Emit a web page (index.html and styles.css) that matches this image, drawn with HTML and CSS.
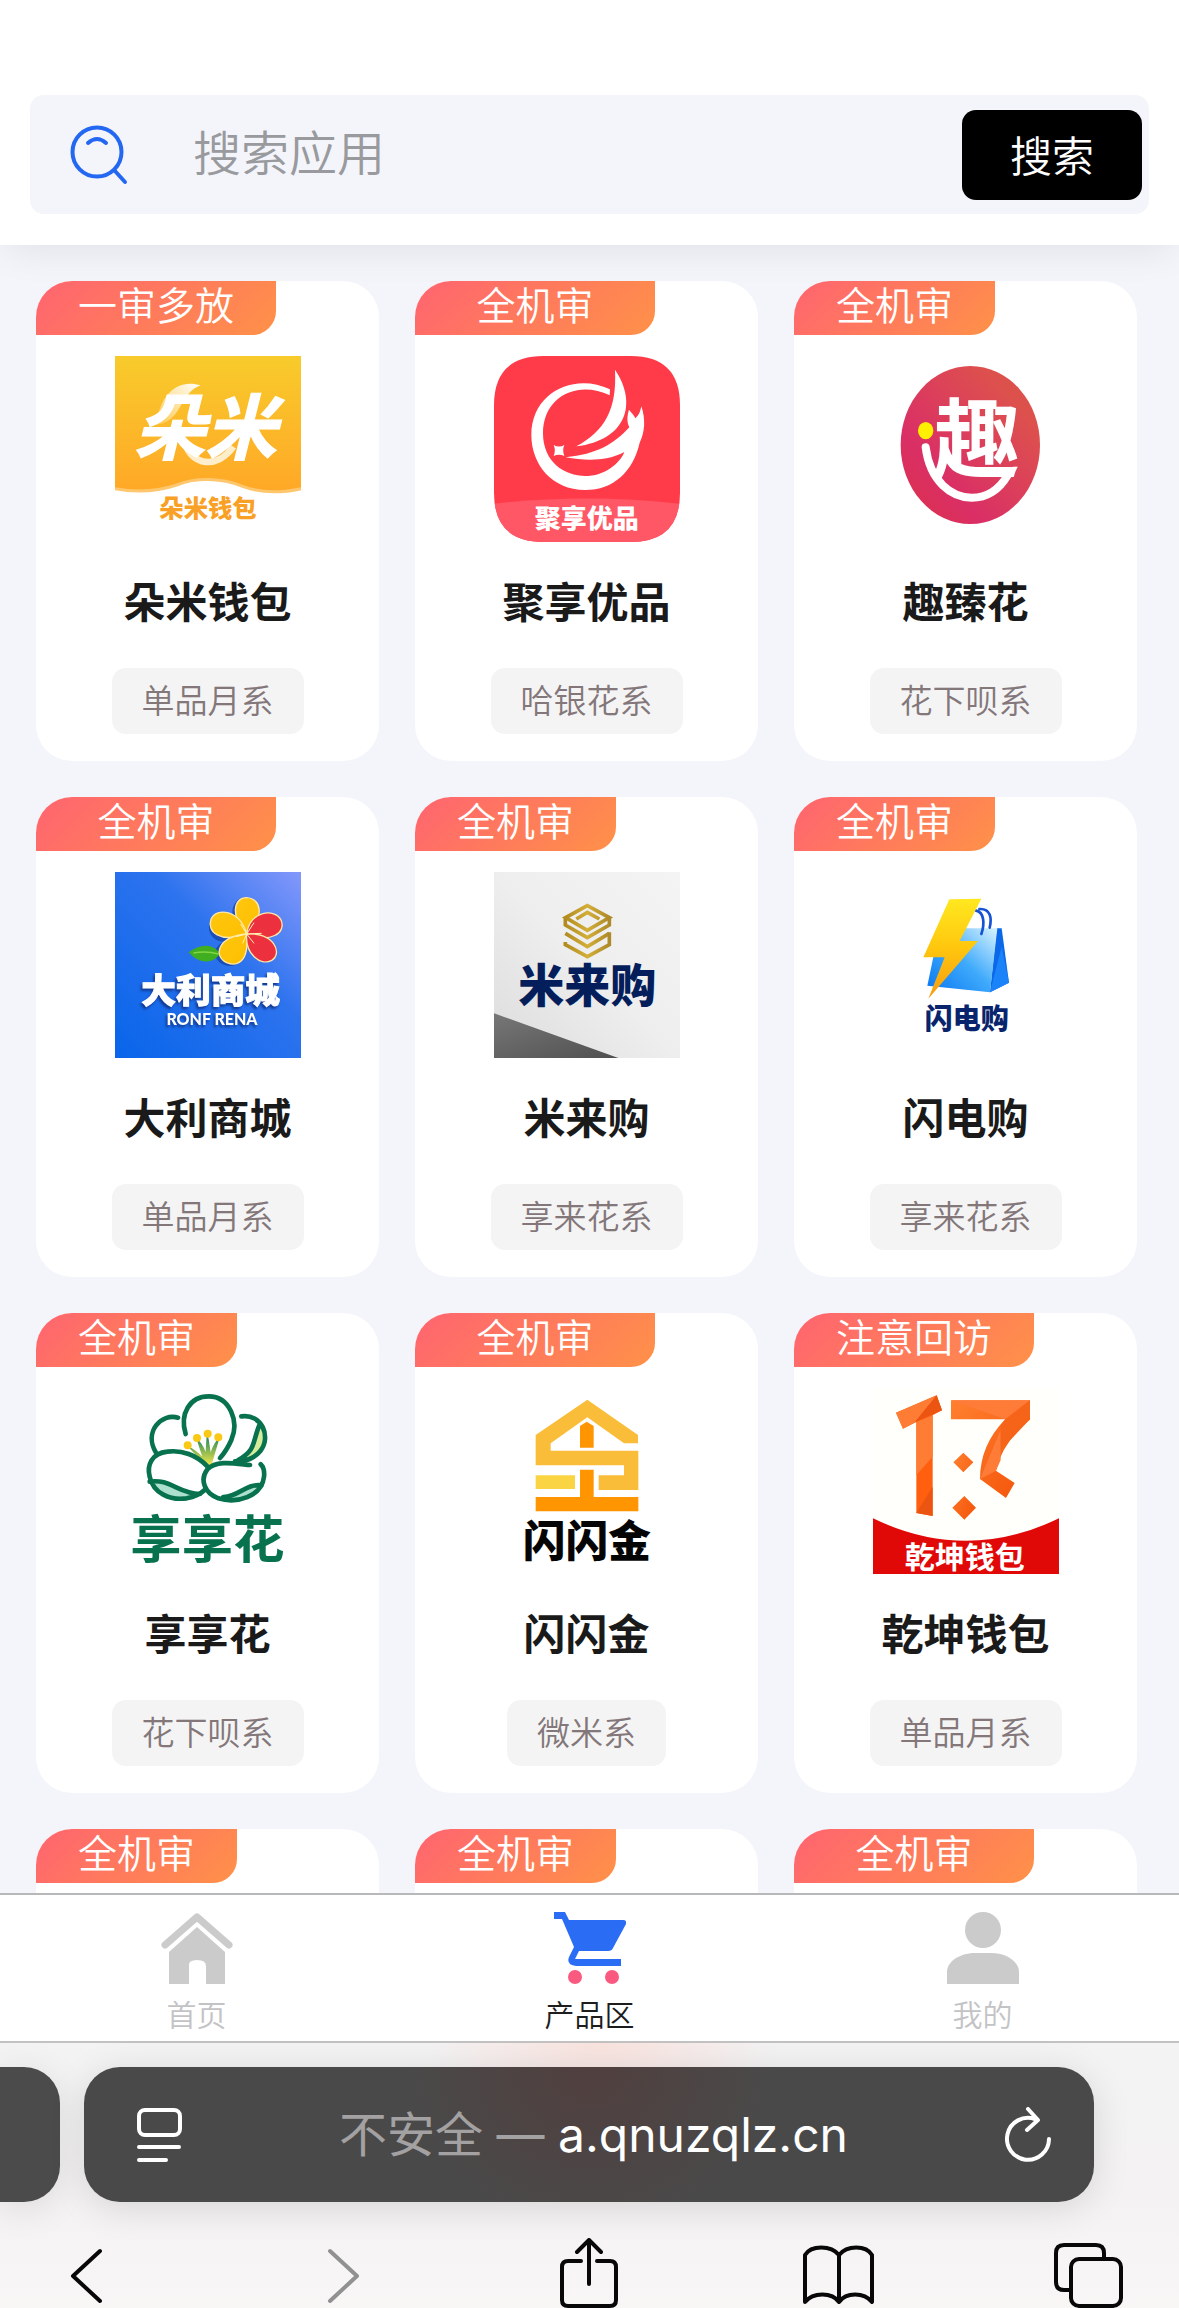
FILE: index.html
```html
<!DOCTYPE html>
<html lang="zh-CN">
<head>
<meta charset="utf-8">
<meta name="viewport" content="width=device-width, initial-scale=1">
<title>产品区</title>
<link rel="stylesheet" href="styles.css">
</head>
<body>
<header class="header">
  <form class="search">
    <svg class="search-icon" viewBox="0 0 58 60" aria-hidden="true"><circle cx="27" cy="27" r="24.500"/><path d="M45 46L55 57M18 18Q27 10 36 18"/></svg>
    <input class="search-input" type="text" placeholder="搜索应用" aria-label="搜索应用">
    <button class="search-button" type="button">搜索</button>
  </form>
</header>

<main class="content">
  <div class="grid">
    <article class="card">
      <span class="tag tag-wide">一审多放</span>
      <svg class="logo" viewBox="345 258 558 558">
        <defs>
          <linearGradient id="duomi" x1="0" y1="0" x2="0" y2="1"><stop offset="0" stop-color="#f8cb2b"/><stop offset="1" stop-color="#ffa827"/></linearGradient>
          <linearGradient id="swoosh" x1="0" y1="1" x2="1" y2="0"><stop offset="0" stop-color="#ffc94a"/><stop offset="1" stop-color="#fff"/></linearGradient>
        </defs>
        <path d="M345 258H903V656C840 670 780 668 730 650C670 625 590 620 530 645C470 665 410 668 345 656Z" fill="url(#duomi)"/>
        <path d="M345 656C410 668 470 665 530 645C590 620 670 625 730 650C780 668 840 670 903 656" fill="none" stroke="#ffc76d" stroke-width="9"/>
        <path d="M468 465C480 370 535 325 602 346C545 365 545 440 490 460Z" fill="url(#swoosh)"/>
        <path d="M555 520C575 585 650 600 700 530" fill="none" stroke="#ffeecb" stroke-width="20"/>
        <text class="logo-text slant" x="402" y="552" font-size="214" fill="#fff" stroke="#fff" stroke-width="4">朵米</text>
        <text class="logo-text" x="624" y="741" font-size="73" text-anchor="middle" fill="#f9a126">朵米钱包</text>
      </svg>
      <h2 class="name">朵米钱包</h2>
      <span class="series">单品月系</span>
    </article>

    <article class="card">
      <span class="tag tag-wide">全机审</span>
      <svg class="logo" viewBox="282 258 558 558">
        <defs><clipPath id="juxiang"><path d="M430 258H692Q840 258 840 406V668Q840 816 692 816H430Q282 816 282 668V406Q282 258 430 258Z"/></clipPath></defs>
        <g clip-path="url(#juxiang)">
          <path d="M282 258H840V816H282Z" fill="#ff3b49"/>
          <path d="M282 701Q560 670 840 701V816H282Z" fill="#ff5766"/>
        </g>
        <path d="M629 376C535 330 429 378 429 490C429 580 500 622 565 618C625 614 665 570 673 546C620 574 560 573 497 562C590 553 642 522 688 472C680 455 681 438 687 419C697 431 703 437 706 445C717 436 721 424 724 409C737 447 735 486 719 518C700 604 640 660 556 660C455 660 394 582 394 495C394 366 524 307 630 358Z" fill="#fff"/>
        <path d="M645 299C713 399 681 510 529 529C614 482 651 420 645 299Z" fill="#fff"/>
        <path d="M461 525Q477 534 493 525Q486 541 493 558Q477 550 461 558Q468 541 461 525Z" fill="#fff"/>
        <text class="logo-text" x="560" y="775" font-size="78" text-anchor="middle" fill="#fff">聚享优品</text>
      </svg>
      <h2 class="name">聚享优品</h2>
      <span class="series">哈银花系</span>
    </article>

    <article class="card">
      <span class="tag">全机审</span>
      <svg class="logo" viewBox="279 258 558 558">
        <defs><linearGradient id="quzhen" x1="1" y1="0" x2="0" y2="1"><stop offset=".2" stop-color="#dd514d"/><stop offset=".7" stop-color="#da2f66"/><stop offset="1" stop-color="#dc3048"/></linearGradient></defs>
        <ellipse cx="571" cy="525" rx="209" ry="237" fill="url(#quzhen)"/>
        <text class="logo-text logo-medium" x="590" y="604" font-size="260" text-anchor="middle" fill="#fff">趣</text>
        <path d="M437 532C450 635 515 683 575 683C625 683 660 655 684 614" fill="none" stroke="#fff" stroke-width="24" stroke-linecap="round"/>
        <ellipse cx="437" cy="482" rx="23" ry="26" fill="#fdf000"/>
      </svg>
      <h2 class="name">趣臻花</h2>
      <span class="series">花下呗系</span>
    </article>

    <article class="card">
      <span class="tag tag-wide">全机审</span>
      <svg class="logo" viewBox="345 276 558 558">
        <defs>
          <linearGradient id="dali" x1="0" y1="1" x2="1" y2="0"><stop offset="0" stop-color="#0965ea"/><stop offset=".6" stop-color="#2d73ee"/><stop offset="1" stop-color="#8498fb"/></linearGradient>
          <linearGradient id="petal" x1="0" y1="0" x2="1" y2="1"><stop offset="0" stop-color="#ffc70f"/><stop offset="1" stop-color="#fdbe00"/></linearGradient>
        </defs>
        <path d="M345 276H903V834H345Z" fill="url(#dali)"/>
        <g fill="#113b9c" opacity=".65"><ellipse cx="672" cy="445" rx="45" ry="40"/><ellipse cx="690" cy="520" rx="45" ry="38"/><ellipse cx="735" cy="396" rx="38" ry="44"/></g>
        <path d="M566 517C600 490 640 490 660 521C640 550 600 556 566 517Z" fill="#3fae20"/>
        <path d="M580 519Q620 512 655 522" stroke="#83d542" stroke-width="5" fill="none"/>
        <g stroke="#ffe7a6" stroke-width="4">
          <path d="M740 462C690 410 700 352 740 353C784 356 796 410 740 462Z" fill="url(#petal)"/>
          <path d="M740 462C660 490 620 455 633 418C650 380 720 390 740 462Z" fill="url(#petal)"/>
          <path d="M740 462C748 550 710 560 680 548C640 530 650 470 740 462Z" fill="url(#petal)"/>
          <path d="M740 462C750 390 825 385 843 420C860 460 810 490 740 462Z" fill="#ec303d"/>
          <path d="M740 462C820 455 850 520 815 541C780 560 735 520 740 462Z" fill="#ec303d"/>
        </g>
        <path d="M740 462L722 432M740 462L708 470M740 462L728 490M740 462L762 428M740 462L785 460M740 462L762 490" stroke="#fff2b0" stroke-width="3"/>
        <text class="logo-text raised" x="632" y="670" font-size="104" text-anchor="middle" fill="#fff" stroke="#fff" stroke-width="3">大利商城</text>
        <text class="logo-latin raised" x="636" y="736" font-size="48" text-anchor="middle" fill="#fff">RONF RENA</text>
      </svg>
      <h2 class="name">大利商城</h2>
      <span class="series">单品月系</span>
    </article>

    <article class="card">
      <span class="tag">全机审</span>
      <svg class="logo" viewBox="282 276 558 558">
        <defs>
          <linearGradient id="milai" x1="1" y1="0" x2="0" y2="1"><stop offset="0" stop-color="#f4f4f4"/><stop offset=".5" stop-color="#eeeeef"/><stop offset="1" stop-color="#dcdcdd"/></linearGradient>
          <linearGradient id="gold" x1="0" y1="0" x2="1" y2="0"><stop offset="0" stop-color="#b18b20"/><stop offset=".5" stop-color="#d3af38"/><stop offset="1" stop-color="#ae8a2a"/></linearGradient>
          <linearGradient id="slate" x1="0" y1="0" x2="1" y2="1"><stop offset="0" stop-color="#777"/><stop offset="1" stop-color="#505050"/></linearGradient>
        </defs>
        <path d="M282 276H840V834H282Z" fill="url(#milai)"/>
        <path d="M282 700L655 834H282Z" fill="url(#slate)"/>
        <g fill="none" stroke="url(#gold)" stroke-width="11">
          <path d="M562 377L628 413L562 451L497 413ZM529 417L562 397L598 417"/>
          <path d="M496 413V435L562 473L628 435V413M496 486V494L562 530L628 494V457"/>
          <path d="M496 460L562 500L628 460"/>
        </g>
        <text class="logo-text" x="562" y="665" font-size="138" text-anchor="middle" fill="#041e5b">米来购</text>
      </svg>
      <h2 class="name">米来购</h2>
      <span class="series">享来花系</span>
    </article>

    <article class="card">
      <span class="tag">全机审</span>
      <svg class="logo" viewBox="279 276 558 558">
        <defs>
          <linearGradient id="bolt" x1="0" y1="0" x2="0" y2="1"><stop offset="0" stop-color="#ffe81f"/><stop offset=".5" stop-color="#ffc60e"/><stop offset="1" stop-color="#f79b11"/></linearGradient>
          <linearGradient id="bag" x1="1" y1="0" x2="0" y2="1"><stop offset="0" stop-color="#d9f3ff"/><stop offset=".5" stop-color="#3faafb"/><stop offset="1" stop-color="#0876f2"/></linearGradient>
        </defs>
        <path d="M650 445H665L687 608L630 637Z" fill="#0a68e9"/>
        <path d="M665 500L687 608L630 637Z" fill="#1b83f9"/>
        <path d="M478 445H652L630 637L442 617Z" fill="url(#bag)"/>
        <path d="M588 392C612 396 615 430 604 462M598 387C632 385 636 415 629 443" fill="none" stroke="#1552d5" stroke-width="8" stroke-linecap="round"/>
        <path d="M508 358L604 356L539 483H594L445 656L494 532H430Z" fill="url(#bolt)"/>
        <text class="logo-text" x="560" y="748" font-size="84" text-anchor="middle" fill="#08246d">闪电购</text>
      </svg>
      <h2 class="name">闪电购</h2>
      <span class="series">享来花系</span>
    </article>

    <article class="card">
      <span class="tag">全机审</span>
      <svg class="logo" viewBox="345 264 558 558">
        <defs><linearGradient id="stamen" x1="0" y1="0" x2="0" y2="1"><stop offset="0" stop-color="#128059"/><stop offset="1" stop-color="#f5e94b"/></linearGradient></defs>
        <path d="M450 548C505 535 530 590 595 583C545 612 480 600 450 548ZM680 592C715 560 745 560 785 556C765 590 725 604 680 592Z" fill="#aee0cf"/>
        <path d="M780 370C750 430 770 455 705 484C775 490 805 430 780 370Z" fill="#d5ec9a"/>
        <path d="M622 497L568 442Q600 462 612 480L592 418Q615 445 618 470L622 405L632 470Q634 445 656 416L634 490Z" fill="url(#stamen)" stroke="url(#stamen)" stroke-width="4"/>
        <g fill="none" stroke="#08724f" stroke-width="14" stroke-linecap="round" stroke-linejoin="round">
          <path d="M557 402C538 340 570 289 626 289C690 289 718 365 694 420Q680 452 660 474"/>
          <path d="M534 353C485 338 430 395 468 458M724 349C785 340 815 410 781 453Q755 485 705 484M780 370C755 430 770 448 715 480"/>
          <path d="M622 499C590 465 545 449 502 455C455 460 440 495 449 530C460 580 510 602 560 595Q595 588 614 570M449 545C510 535 535 582 600 582"/>
          <path d="M750 495C700 490 650 480 622 508C598 540 614 580 655 595C710 612 785 590 792 530Q795 505 782 493M785 556C735 550 720 590 670 591"/>
        </g>
        <g fill="#fac916"><circle cx="563" cy="436" r="12"/><circle cx="591" cy="414" r="12"/><circle cx="623" cy="401" r="12"/><circle cx="655" cy="412" r="12"/></g>
        <text class="logo-text logo-medium" x="622" y="775" font-size="154" text-anchor="middle" fill="#08724f">享享花</text>
      </svg>
      <h2 class="name">享享花</h2>
      <span class="series">花下呗系</span>
    </article>

    <article class="card">
      <span class="tag tag-wide">全机审</span>
      <svg class="logo" viewBox="282 264 558 558">
        <path d="M562 299L714 405V430H672L562 352L452 430V452H715V570H596V526H672V496H407V405Z" fill="#fabd39"/>
        <path d="M407 526H525V567H407Z" fill="#fbd443"/>
        <path d="M540 378L560 365L581 378V443H540ZM540 509H581V591H715V634H407V591H540Z" fill="#ff9500"/>
        <text class="logo-text" x="561" y="771" font-size="128" text-anchor="middle" fill="#050505">闪闪金</text>
      </svg>
      <h2 class="name">闪闪金</h2>
      <span class="series">微米系</span>
    </article>

    <article class="card">
      <span class="tag tag-wide">注意回访</span>
      <svg class="logo" viewBox="279 264 558 558">
        <defs><linearGradient id="ribbon" x1="0" y1="0" x2="1" y2="1"><stop offset="0" stop-color="#ff8030"/><stop offset="1" stop-color="#f45409"/></linearGradient></defs>
        <path d="M279 264H837V822H279Z" fill="#fffffc"/>
        <path d="M279 655Q558 790 837 655V822H279Z" fill="#e10808"/>
        <path d="M348 338L470 286L486 331L458 346V648L409 639V366L369 386Z" fill="#ff5f0f"/>
        <path d="M348 338L470 286L405 366L369 386ZM409 525L458 470V346L409 366Z" fill="#ff7c35"/>
        <path d="M405 366L470 286L486 331ZM409 639L458 560V648Z" fill="#ec5412"/>
        <path d="M513 301H750V358Q665 430 648 512L704 549L678 594L600 537Q600 435 676 358H513Z" fill="url(#ribbon)"/>
        <path d="M513 301L750 301L676 358ZM600 537L662 390V480L648 512Z" fill="#ff7c38"/>
        <path d="M676 358L750 301V358L662 450V375Z" fill="#f56419"/>
        <path d="M550 458L580 487L550 517L520 487ZM553 588L588 623L553 659L517 623Z" fill="url(#ribbon)"/>
        <text class="logo-text logo-medium" x="554" y="803" font-size="90" text-anchor="middle" fill="#fff">乾坤钱包</text>
      </svg>
      <h2 class="name">乾坤钱包</h2>
      <span class="series">单品月系</span>
    </article>

    <article class="card"><span class="tag">全机审</span></article>
    <article class="card"><span class="tag">全机审</span></article>
    <article class="card"><span class="tag tag-wide">全机审</span></article>
  </div>
</main>

<nav class="tabs">
  <a class="tab" href="#">
    <svg class="tab-icon" viewBox="0 0 72 72" aria-hidden="true"><path d="M4 33L36 5L68 33" fill="none" stroke="#cbcbcb" stroke-width="7" stroke-linecap="round" stroke-linejoin="round"/><path d="M36 15L64 40V72H45V54Q45 48 36 48T28 54V72H8V40Z" fill="#cbcbcb"/></svg>
    <span>首页</span>
  </a>
  <a class="tab tab-active" href="#">
    <svg class="tab-icon" viewBox="0 0 72 72" aria-hidden="true"><path d="M0 0H11L15 8H69Q73 8 72 12L59 36Q58 39 54 39H25L21 47H67V54H22Q12 53 15 45L20 35L8 7H0Z" fill="#2a6df4"/><circle cx="21" cy="65" r="7" fill="#fb5a80"/><circle cx="58" cy="65" r="7" fill="#fb5a80"/></svg>
    <span>产品区</span>
  </a>
  <a class="tab" href="#">
    <svg class="tab-icon" viewBox="0 0 72 72" aria-hidden="true"><circle cx="36" cy="18" r="18" fill="#cbcbcb"/><path d="M0 72V60C0 50 12 41 28 41H44C60 41 72 50 72 60V72Z" fill="#cbcbcb"/></svg>
    <span>我的</span>
  </a>
</nav>

<footer class="browser">
  <div class="address-row">
    <div class="previous-page"></div>
    <div class="address">
      <button class="icon-button" type="button" aria-label="页面菜单"><svg class="address-icon" viewBox="0 0 48 56"><rect x="4" y="3" width="41" height="25" rx="6"/><path d="M4 40H44M4 53H31"/></svg></button>
      <p class="url"><span class="url-note">不安全 —</span> a.qnuzqlz.cn</p>
      <button class="icon-button" type="button" aria-label="刷新"><svg class="address-icon" viewBox="0 0 48 56"><path d="M45 32A21 21 0 1 1 31 12M24 2L34 13L23 23"/></svg></button>
    </div>
  </div>
  <div class="toolbar">
    <button class="icon-button" type="button" aria-label="后退"><svg class="tool-icon" viewBox="0 0 72 70"><path d="M50 13L23 38L50 63"/></svg></button>
    <button class="icon-button" type="button" aria-label="前进" disabled><svg class="tool-icon" viewBox="0 0 72 70"><path d="M29 13L56 38L29 63"/></svg></button>
    <button class="icon-button" type="button" aria-label="分享"><svg class="tool-icon" viewBox="0 0 72 70"><path d="M30 23H17Q11 23 11 29V62Q11 68 17 68H59Q65 68 65 62V29Q65 23 59 23H46M38 46V3M26 14L38 2L50 14"/></svg></button>
    <button class="icon-button" type="button" aria-label="书签"><svg class="tool-icon" viewBox="0 0 72 70"><path d="M37 17C29 7 9 7 3 17V64C11 54 30 54 37 64C44 54 62 54 70 64V17C64 7 45 7 37 17V64"/></svg></button>
    <button class="icon-button" type="button" aria-label="标签页"><svg class="tool-icon" viewBox="0 0 72 70"><path d="M19 52H12Q4 52 4 44V15Q4 7 12 7H44Q52 7 52 15V20"/><rect x="19" y="21" width="50" height="47" rx="8"/></svg></button>
  </div>
</footer>
</body>
</html>
```
FILE: styles.css
```css
* { box-sizing: border-box; }

body {
  margin: 0;
  height: 100vh;
  display: flex;
  flex-direction: column;
  overflow: hidden;
  background: #f4f5fa;
  font-family: Inter, "Noto Sans CJK SC", sans-serif;
  font-weight: 350;
}

button, input { font: inherit; border: 0; }

/* Search header */
.header {
  flex: none;
  position: relative;
  z-index: 1;
  padding: 95px 30px 31px;
  background: #fff;
  box-shadow: 0 12px 36px -6px rgba(0, 0, 0, .08);
}
.search {
  display: flex;
  align-items: center;
  padding: 15px 7px 14px 40px;
  border-radius: 14px;
  background: #f4f5fa;
}
.search-icon {
  flex: none;
  width: 58px;
  height: 60px;
  fill: none;
  stroke: #2468f2;
  stroke-width: 4;
  stroke-linecap: round;
}
.search-input {
  flex: 1;
  min-width: 0;
  height: 76px;
  margin-left: 65px;
  padding: 0 0 4px;
  background: none;
  outline: 0;
  font-size: 48px;
  color: #333;
}
.search-input::placeholder { color: #999a9e; opacity: 1; }
.search-button {
  flex: none;
  width: 180px;
  height: 90px;
  padding: 0 0 4px;
  border-radius: 14px;
  background: #000;
  color: #fff;
  font-size: 42px;
}

/* Product cards */
.content { flex: 1; min-height: 0; overflow: hidden; }
.grid {
  display: grid;
  grid-template-columns: repeat(3, 1fr);
  gap: 36px;
  padding: 36px 42px 36px 36px;
}
.card {
  display: flex;
  flex-direction: column;
  align-items: center;
  min-height: 480px;
  padding-bottom: 27px;
  border-radius: 36px;
  background: #fff;
  overflow: hidden;
}
.tag {
  align-self: flex-start;
  min-width: 201px;
  height: 54px;
  padding: 0 42px;
  border-radius: 0 0 24px 0;
  background: linear-gradient(135deg, #ff6470, #ff9148);
  color: #fff;
  font-size: 39px;
  line-height: 50px;
  text-align: center;
  white-space: nowrap;
}
.tag-wide { min-width: 240px; }
.logo { width: 186px; height: 186px; margin-top: 21px; overflow: visible; }
.logo-text { font-family: "Noto Sans CJK SC", sans-serif; font-weight: 900; }
.logo-medium { font-weight: 700; }
.logo-latin { font-family: Lato, sans-serif; font-weight: 900; }
.slant { font-style: italic; font-weight: 700; }
.raised { filter: drop-shadow(-5px 7px 3px #123a91); }
.name {
  margin: 31px 0 0;
  color: #1a1a1a;
  font-size: 42px;
  font-weight: 700;
  line-height: 60px;
}
.series {
  margin-top: 35px;
  padding: 0 30px;
  border-radius: 14px;
  background: #f5f4f5;
  color: #83777a;
  font-size: 33px;
  line-height: 66px;
}

/* Site navigation */
.tabs {
  flex: none;
  display: grid;
  grid-template-columns: repeat(3, 1fr);
  padding: 17px 0 5px;
  border-top: 2px solid #b7b8ba;
  border-bottom: 2px solid #c2c2c2;
  background: #fff;
}
.tab {
  display: flex;
  flex-direction: column;
  align-items: center;
  gap: 10px;
  color: #c3c3c6;
  font-size: 30px;
  line-height: 42px;
  text-decoration: none;
}
.tab-active { color: #1d1d1d; }
.tab-icon { width: 72px; height: 72px; }

/* Browser controls */
.browser {
  flex: none;
  padding-top: 24px;
  background: radial-gradient(ellipse 180px 70px at 51% 0, #f9e2dd, transparent), linear-gradient(#f3f3f4, #f4f2f3 60%, #f9f6f6);
}
.address-row { display: flex; gap: 24px; padding-right: 85px; }
.previous-page {
  flex: none;
  width: 60px;
  border-radius: 0 36px 36px 0;
  background: #4b4b4b;
  box-shadow: 0 6px 36px rgba(0, 0, 0, .1);
}
.address {
  flex: 1;
  display: flex;
  align-items: center;
  justify-content: space-between;
  height: 135px;
  padding: 0 42px 0 51px;
  border-radius: 36px;
  background: radial-gradient(ellipse 180px 160px at 50% 0, #503f3e, transparent), #4a4949;
  box-shadow: 0 6px 36px rgba(0, 0, 0, .12);
}
.url { margin: 0; color: #fff; font-size: 48px; font-weight: 400; line-height: 72px; white-space: nowrap; }
.url-note { color: #a3a1a1; }
.icon-button { display: block; padding: 0; background: none; color: #080808; }
.icon-button:disabled { color: #929191; }
.address-icon, .tool-icon {
  display: block;
  fill: none;
  stroke: currentColor;
  stroke-width: 4;
  stroke-linecap: round;
  stroke-linejoin: round;
}
.address-icon { width: 48px; height: 56px; color: #fff; }
.toolbar { display: flex; justify-content: space-between; padding: 36px 55px 0 50px; }
.tool-icon { width: 72px; height: 70px; }
```
